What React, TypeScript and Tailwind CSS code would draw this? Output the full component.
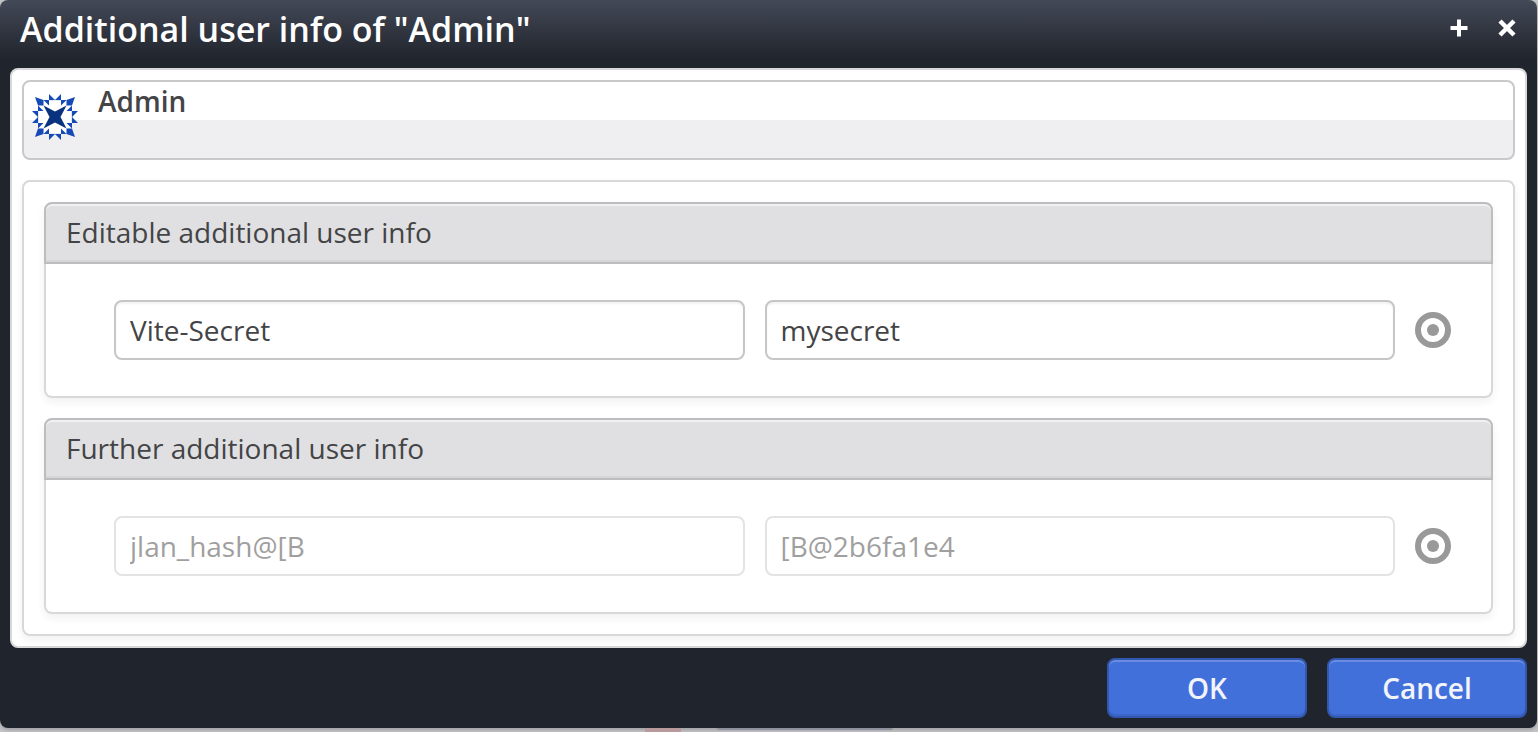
import { ReactNode } from 'react';

interface InfoEntry {
  name: string;
  value: string;
}

const editableInfo: InfoEntry[] = [{ name: 'Vite-Secret', value: 'mysecret' }];
const furtherInfo: InfoEntry[] = [{ name: 'jlan_hash@[B', value: '[B@2b6fa1e4' }];

export default function App() {
  return (
    <div className="min-h-screen bg-[#c6c6c8] pr-px font-['Open_Sans','Noto_Sans',sans-serif] text-[28px] text-[#444446]">
      <div
        role="dialog"
        aria-labelledby="dialog-title"
        className="rounded-lg bg-[#20242c] bg-linear-to-b from-[#434957] to-[#20242c] to-[60px] px-[10px] pb-[10px] shadow-[0_2px_4px_rgba(0,0,0,0.2)]"
      >
        {/* Title bar */}
        <header className="flex h-[68px] items-start justify-between pt-2 pr-2 pl-[10px] text-white">
          <h1 id="dialog-title" className="text-[34px] leading-[42px] font-semibold">
            Additional user info of "Admin"
          </h1>
          <div className="flex gap-6 pt-2">
            <button type="button" aria-label="Maximize">
              <PlusIcon />
            </button>
            <button type="button" aria-label="Close">
              <CloseIcon />
            </button>
          </div>
        </header>

        {/* Content */}
        <main className="rounded-lg border-2 border-[#d8d8da] bg-white p-[10px]">
          <div className="flex h-20 items-start gap-5 rounded-lg border-2 border-[#c9c9cb] bg-linear-to-b from-white from-50% to-[#efeff1] to-50% px-2">
            <Avatar />
            <span className="text-[28px] leading-[38px] font-semibold">Admin</span>
          </div>

          <div className="mt-5 flex flex-col gap-5 rounded-lg border-2 border-[#d8d8da] p-5 shadow-[0_4px_8px_rgba(0,0,0,0.06)]">
            <InfoSection title="Editable additional user info">
              {editableInfo.map((entry) => (
                <InfoRow key={entry.name} entry={entry} />
              ))}
            </InfoSection>
            <InfoSection title="Further additional user info">
              {furtherInfo.map((entry) => (
                <InfoRow key={entry.name} entry={entry} disabled />
              ))}
            </InfoSection>
          </div>
        </main>

        {/* Actions */}
        <footer className="flex justify-end gap-5 pt-[10px]">
          <DialogButton>OK</DialogButton>
          <DialogButton>Cancel</DialogButton>
        </footer>
      </div>

      {/* Dimmed page behind the dialog */}
      <div aria-hidden="true" className="flex h-1 items-start justify-center gap-9">
        <div className="h-1 w-9 bg-[#b89a9c]" />
        <div className="h-0.5 w-44 rounded-b-sm bg-[#8d909e]" />
      </div>
    </div>
  );
}

function InfoSection({ title, children }: { title: string; children: ReactNode }) {
  return (
    <section className="rounded-lg bg-white shadow-[0_4px_8px_rgba(0,0,0,0.06)]">
      <h2 className="h-[62px] rounded-t-lg border-2 border-[#bdbdbf] bg-[#e0e0e2] px-5 text-[28px] leading-[56px] shadow-[inset_0_2px_0_#f0f0f2,inset_0_-2px_0_#d6d6d8]">
        {title}
      </h2>
      <div className="rounded-b-lg border-2 border-t-0 border-[#d8d8da] py-9 pr-10 pl-[68px]">
        {children}
      </div>
    </section>
  );
}

function InfoRow({ entry, disabled = false }: { entry: InfoEntry; disabled?: boolean }) {
  const inputClass =
    'h-[60px] min-w-0 flex-1 rounded-lg border-2 border-[#c6c6c8] bg-white px-[14px] text-[28px] shadow-[inset_0_2px_2px_rgba(0,0,0,0.05)] disabled:border-[#e3e3e4] disabled:text-[#9f9fa0] disabled:shadow-none';

  return (
    <div className="flex items-center gap-5">
      <input aria-label="Key" className={inputClass} defaultValue={entry.name} disabled={disabled} />
      <input aria-label="Value" className={inputClass} defaultValue={entry.value} disabled={disabled} />
      <button type="button" aria-label="Entry options" className="text-[#999999]">
        <svg width="36" height="36" viewBox="0 0 36 36" className="block">
          <circle cx="18" cy="18" r="15" fill="none" stroke="currentColor" strokeWidth="6" />
          <circle cx="18" cy="18" r="6" fill="currentColor" />
        </svg>
      </button>
    </div>
  );
}

function DialogButton({ children }: { children: ReactNode }) {
  return (
    <button
      type="button"
      className="h-[60px] w-[200px] rounded-lg border-2 border-[#3157ae] bg-[#4270db] text-[28px] font-semibold text-[#f3f4fb] shadow-[inset_0_2px_0_#6a8de2,inset_0_-2px_0_#3c66c9]"
    >
      {children}
    </button>
  );
}

function PlusIcon() {
  return (
    <svg width="24" height="24" viewBox="0 0 24 24" className="block">
      <path d="M12 3.500v17M3.500 12h17" stroke="currentColor" strokeWidth="4" />
    </svg>
  );
}

function CloseIcon() {
  return (
    <svg width="24" height="24" viewBox="0 0 24 24" className="block">
      <path d="M5 5l14 14M19 5L5 19" stroke="currentColor" strokeWidth="4.500" />
    </svg>
  );
}

function Avatar() {
  // One quarter of the emblem, repeated around the centre
  return (
    <svg width="46" height="46" viewBox="-23 -23 46 46" className="mt-3 block">
      <path d="M-11.500-17H11.500V-11.500H17V11.500H11.500V17H-11.500V11.500H-17V-11.500H-11.500Z" fill="#ffffff" />
      {[0, 90, 180, 270].map((angle) => (
        <g key={angle} transform={`rotate(${angle})`}>
          <path d="M-20-20L-11.500-17V-11.500H-17Z" fill="#1649b8" />
          <path
            d="M-11.500-17H-6V-11.500ZM-6-23L0-17H-6ZM0-17H6V-23ZM6-17H11.500L6-11.500Z"
            fill="#1649b8"
          />
          <path d="M-6-17H6" stroke="#1649b8" strokeOpacity="0.5" strokeWidth="0.5" />
          <path d="M-11.500-11.500L0-5.500V0H-5.500Z" fill="#0a337f" />
        </g>
      ))}
    </svg>
  );
}
